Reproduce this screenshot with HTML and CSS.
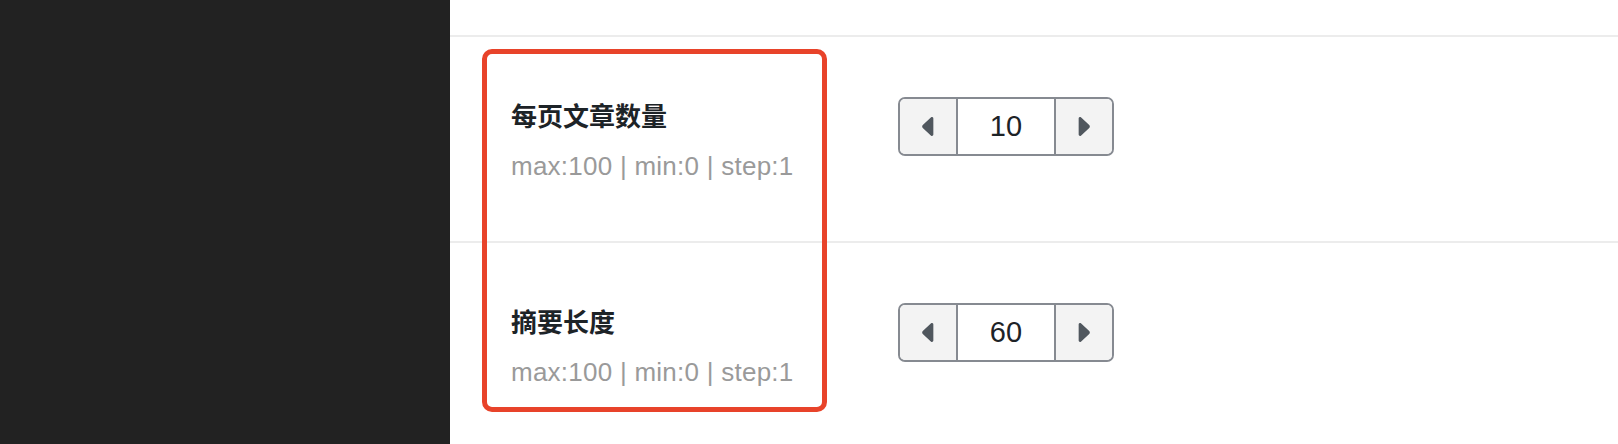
FILE: index.html
```html
<!DOCTYPE html>
<html lang="zh">
<head>
<meta charset="utf-8">
<link rel="stylesheet" href="styles.css">
</head>
<body>
<div class="page">
  <aside class="sidebar"></aside>
  <main class="main">
    <div class="top"></div>
    <div class="row">
      <div class="label">
        <div class="title">每页文章数量</div>
        <div class="desc">max:100 | min:0 | step:1</div>
      </div>
      <div class="field">
        <div class="stepper">
          <button class="btn"><svg width="12" height="19" viewBox="1.2 1 9.6 16"><path d="M10.5 2.2v13.6c0 1-1.1 1.5-1.9.9L1.6 10.2c-.7-.6-.7-1.8 0-2.4l7-6.5c.8-.6 1.9-.1 1.9.9z" fill="#50575e"/></svg></button>
          <div class="value">10</div>
          <button class="btn"><svg width="12" height="19" viewBox="1.2 1 9.6 16"><path d="M1.5 2.2v13.6c0 1 1.1 1.5 1.9.9l7-6.5c.7-.6.7-1.8 0-2.4l-7-6.5c-.8-.6-1.9-.1-1.9.9z" fill="#50575e"/></svg></button>
        </div>
      </div>
    </div>
    <div class="row">
      <div class="label">
        <div class="title">摘要长度</div>
        <div class="desc">max:100 | min:0 | step:1</div>
      </div>
      <div class="field">
        <div class="stepper">
          <button class="btn"><svg width="12" height="19" viewBox="1.2 1 9.6 16"><path d="M10.5 2.2v13.6c0 1-1.1 1.5-1.9.9L1.6 10.2c-.7-.6-.7-1.8 0-2.4l7-6.5c.8-.6 1.9-.1 1.9.9z" fill="#50575e"/></svg></button>
          <div class="value">60</div>
          <button class="btn"><svg width="12" height="19" viewBox="1.2 1 9.6 16"><path d="M1.5 2.2v13.6c0 1 1.1 1.5 1.9.9l7-6.5c.7-.6.7-1.8 0-2.4l-7-6.5c-.8-.6-1.9-.1-1.9.9z" fill="#50575e"/></svg></button>
        </div>
      </div>
    </div>
    <div class="highlight"></div>
  </main>
</div>
</body>
</html>
```
FILE: styles.css
```css
html, body {
  margin: 0;
  padding: 0;
  background: #ffffff;
}
body {
  font-family: "Liberation Sans", "Noto Sans CJK SC", sans-serif;
  color: #1d2327;
}
.page {
  display: flex;
  width: 1618px;
  height: 444px;
  overflow: hidden;
}
.sidebar {
  width: 450px;
  flex: 0 0 450px;
  background: #222222;
}
.main {
  position: relative;
  flex: 1;
  background: #ffffff;
}
.top {
  height: 35px;
}
.row {
  display: flex;
  height: 204px;
  border-top: 2px solid #ececec;
}
.label {
  width: 387px;
  padding-left: 61px;
  padding-top: 60px;
  box-sizing: content-box;
}
.title {
  font-size: 26px;
  line-height: 36px;
  font-weight: 700;
  color: #1d2327;
  font-family: "Noto Sans CJK SC", "Liberation Sans", sans-serif;
  margin-bottom: 15px;
}
.desc {
  font-size: 26px;
  line-height: 36px;
  color: #9a9a9a;
  letter-spacing: 0.25px;
}
.field {
  padding-top: 60px;
}
.stepper {
  display: flex;
  border: 2px solid #868a91;
  border-radius: 7px;
  overflow: hidden;
  height: 55px;
}
.btn {
  width: 56px;
  height: 55px;
  padding: 0;
  margin: 0;
  border: none;
  background: #f3f3f3;
  display: flex;
  align-items: center;
  justify-content: center;
}
.value {
  width: 96px;
  border-left: 2px solid #868a91;
  border-right: 2px solid #868a91;
  background: #ffffff;
  display: flex;
  align-items: center;
  justify-content: center;
  font-size: 29px;
  color: #1d2327;
}
.highlight {
  position: absolute;
  left: 32px;
  top: 49px;
  width: 335px;
  height: 353px;
  border: 5px solid #e8432a;
  border-radius: 10px;
}
```
